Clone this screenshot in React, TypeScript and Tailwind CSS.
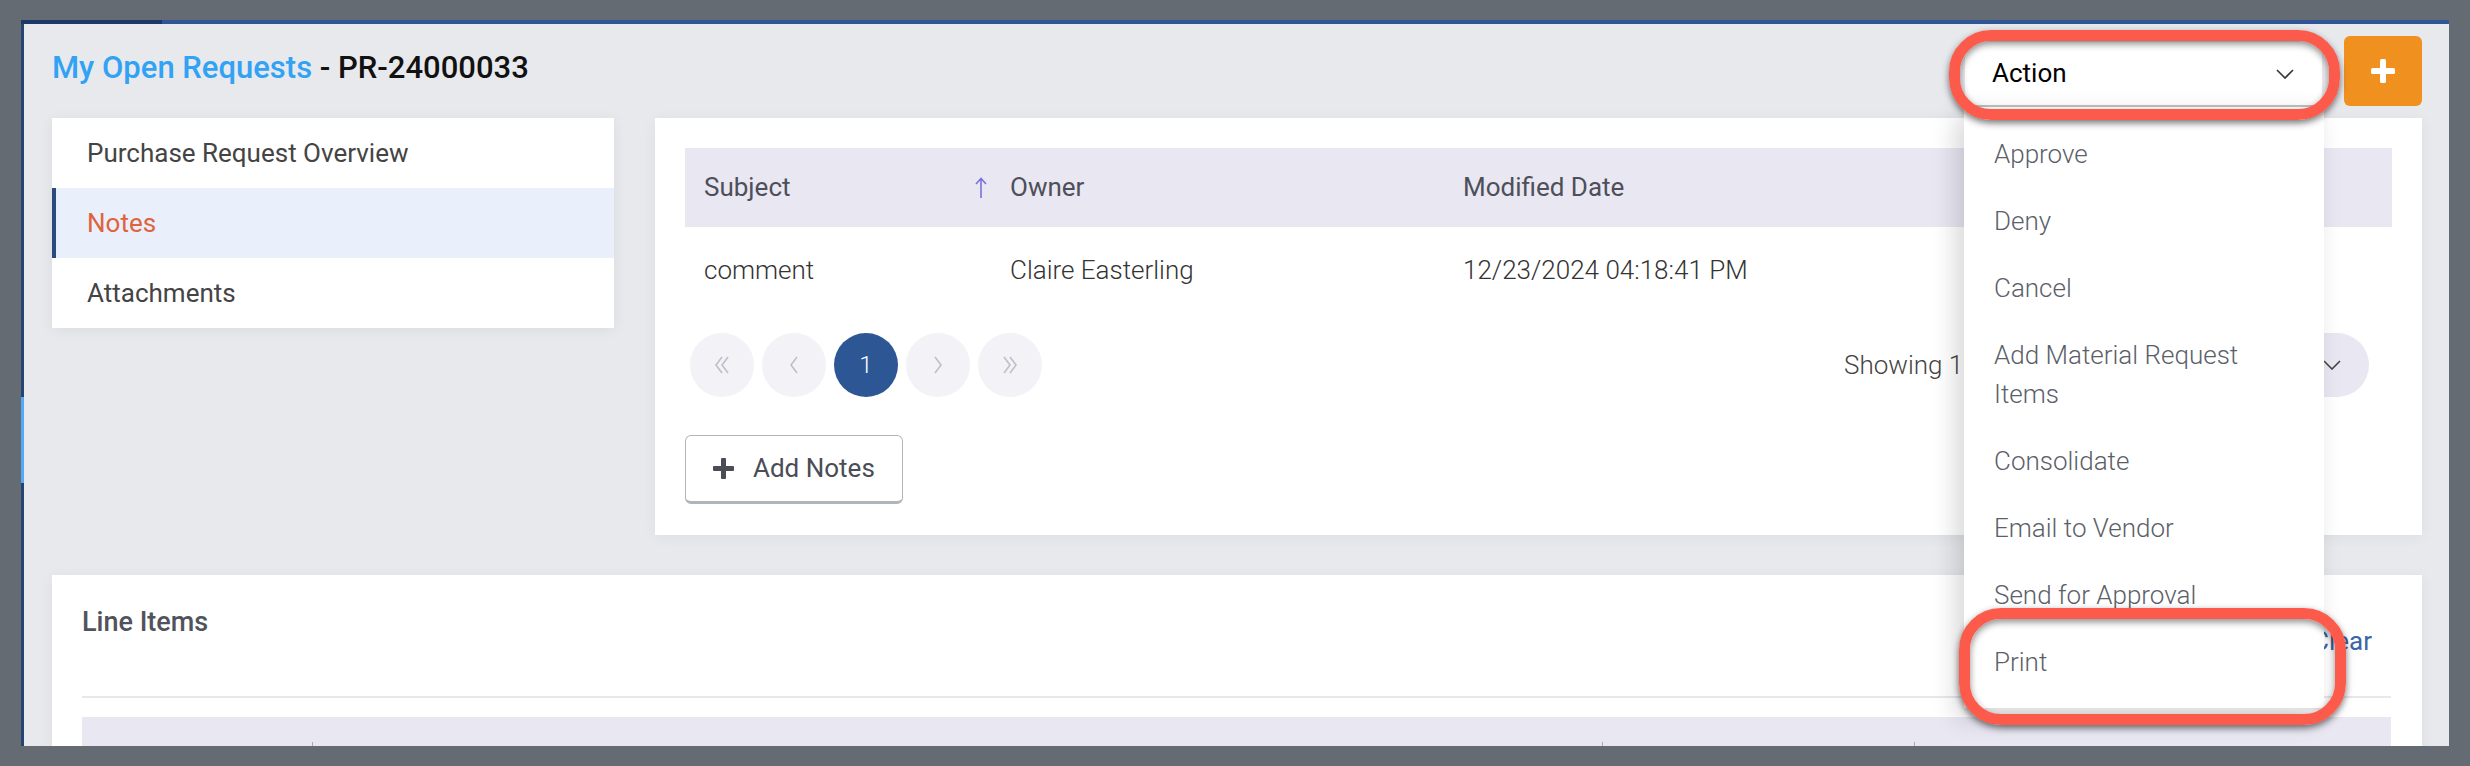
import React from 'react';

const menuItems = ['Approve', 'Deny', 'Cancel', 'Add Material Request|Items', 'Consolidate', 'Email to Vendor', 'Send for Approval', 'Print'];

const Chevron = ({ dir, double }: { dir: 'left' | 'right'; double?: boolean }) => {
  const one = dir === 'left' ? 'M9 2 L3 10 L9 18' : 'M3 2 L9 10 L3 18';
  const two = dir === 'left' ? 'M15 2 L9 10 L15 18' : 'M9 2 L15 10 L9 18';
  return (
    <svg width={double ? 18 : 12} height="20" viewBox={double ? '0 0 18 20' : '0 0 12 20'} fill="none" stroke="#bfbfcc" strokeWidth="1.6">
      <path d={one} />
      {double && <path d={two} />}
    </svg>
  );
};

const DownChevron = ({ color = '#333' }: { color?: string }) => (
  <svg width="18" height="10" viewBox="0 0 18 10" fill="none" stroke={color} strokeWidth="1.6">
    <path d="M1 1 L9 9 L17 1" />
  </svg>
);

const App = () => {
  return (
    <div className="w-[2470px] h-[766px] bg-[#646b73] pt-[20px] pl-[21px] pr-[21px] pb-[20px] overflow-hidden font-['Roboto','Liberation_Sans',sans-serif]">
      <div className="h-full flex flex-col overflow-hidden">
        {/* top accent bar */}
        <div className="h-[4px] flex shrink-0">
          <div className="w-[141px] bg-[#1d3868]" />
          <div className="flex-1 bg-[#2f5596]" />
        </div>

        <div className="flex-1 flex min-h-0">
          <div className="w-[3px] flex flex-col shrink-0">
            <div className="h-[373px] bg-[#264375]" />
            <div className="h-[86px] bg-[#54a8f8]" />
            <div className="flex-1 bg-[#264375]" />
          </div>

          <div className="flex-1 relative bg-[#e8e9ed] pl-[28px] pr-[27px] overflow-hidden">
            {/* title row */}
            <div className="h-[94px] flex items-start justify-between">
              <div className="mt-[24px] leading-[40px] text-[31px] font-medium">
                <span className="text-[#31a2f4]">My Open Requests</span>
                <span className="text-[#111]"> - PR-24000033</span>
              </div>
              <div className="flex items-start gap-[22px]">
                <div className="relative mt-[18px] w-[357px] h-[65px]">
                  <div className="h-full bg-white rounded-[4px] border-b-2 border-[#c4c4c4] flex items-center justify-between pl-[27px] pr-[28px]">
                    <span className="text-[26px] text-black">Action</span>
                    <DownChevron />
                  </div>
                  <div className="absolute z-10 top-[65px] left-[-1px] w-[360px] bg-white pt-[14px] pb-[12px] border-b-2 border-[#e2e2e2] shadow-[-8px_8px_24px_rgba(0,0,0,0.16)]">
                    {menuItems.map((item) => (
                      <div key={item} className="py-[14px] pl-[30px] text-[26px] leading-[39px] font-light text-[#5c5f69]">
                        {item.split('|').map((line) => (
                          <div key={line}>{line}</div>
                        ))}
                      </div>
                    ))}
                  </div>
                </div>
                <div className="mt-[12px] w-[78px] h-[70px] rounded-[6px] bg-[#f0901e] flex items-center justify-center">
                  <svg width="26" height="26" viewBox="0 0 26 26">
                    <rect x="10" y="1" width="6" height="24" rx="1.5" fill="#fff" />
                    <rect x="1" y="10" width="24" height="6" rx="1.5" fill="#fff" />
                  </svg>
                </div>
              </div>
            </div>

            {/* sidebar + notes */}
            <div className="flex items-start gap-[41px]">
              <div className="w-[562px] shrink-0 bg-white shadow-[0_2px_14px_rgba(0,0,0,0.06)] text-[26px] text-[#444]">
                <div className="h-[70px] flex items-center pl-[35px]">Purchase Request Overview</div>
                <div className="h-[70px] flex items-center pl-[31px] bg-[#e9f0fb] border-l-[4px] border-[#2b4a7e] text-[#e0633c]">Notes</div>
                <div className="h-[70px] flex items-center pl-[35px]">Attachments</div>
              </div>

              <div className="flex-1 h-[417px] bg-white px-[30px] pt-[30px] shadow-[0_2px_14px_rgba(0,0,0,0.05)]">
                <div className="h-[79px] bg-[#e9e7f2] flex items-center text-[26px] text-[#4d4f5a]">
                  <div className="w-[306px] pl-[19px] pr-[4px] flex items-center justify-between">
                    <span>Subject</span>
                    <svg width="12" height="22" viewBox="0 0 12 22" fill="none" stroke="#7a72db" strokeWidth="1.6">
                      <path d="M6 21 V2 M1 7 L6 1.5 L11 7" />
                    </svg>
                  </div>
                  <div className="w-[453px] pl-[19px]">Owner</div>
                  <div className="pl-[19px]">Modified Date</div>
                </div>
                <div className="h-[86px] flex items-center text-[26px] font-light text-[#333]">
                  <div className="w-[306px] pl-[19px]">comment</div>
                  <div className="w-[453px] pl-[19px]">Claire Easterling</div>
                  <div className="pl-[19px]">12/23/2024 04:18:41 PM</div>
                </div>

                <div className="mt-[20px] h-[64px] flex items-center justify-between pl-[5px] pr-[23px]">
                  <div className="flex gap-[8px]">
                    <div className="w-[64px] h-[64px] rounded-full bg-[#f2f2f7] flex items-center justify-center"><Chevron dir="left" double /></div>
                    <div className="w-[64px] h-[64px] rounded-full bg-[#f2f2f7] flex items-center justify-center"><Chevron dir="left" /></div>
                    <div className="w-[64px] h-[64px] rounded-full bg-[#2d5694] flex items-center justify-center text-white text-[24px] font-light">1</div>
                    <div className="w-[64px] h-[64px] rounded-full bg-[#f2f2f7] flex items-center justify-center"><Chevron dir="right" /></div>
                    <div className="w-[64px] h-[64px] rounded-full bg-[#f2f2f7] flex items-center justify-center"><Chevron dir="right" double /></div>
                  </div>
                  <div className="w-[525px] flex items-center justify-between">
                    <span className="text-[26px] font-light text-[#444]">Showing 1 to 1 of 1 entries</span>
                    <div className="w-[130px] h-[64px] rounded-full bg-[#e9e7f2] flex items-center justify-end pr-[28px]">
                      <DownChevron color="#444" />
                    </div>
                  </div>
                </div>

                <div className="mt-[38px] w-[218px] h-[69px] rounded-[6px] border-[1.5px] border-b-[3px] border-[#aeb6ba] flex items-center pl-[27px] gap-[19px] text-[26px] text-[#4a4d55]">
                  <svg width="21" height="21" viewBox="0 0 21 21">
                    <rect x="8" y="0" width="5" height="21" rx="1" fill="#4a4d55" />
                    <rect x="0" y="8" width="21" height="5" rx="1" fill="#4a4d55" />
                  </svg>
                  <span>Add Notes</span>
                </div>
              </div>
            </div>

            {/* line items */}
            <div className="mt-[40px] bg-white pl-[30px] pr-[31px] pt-[27px] h-[200px] shadow-[0_2px_14px_rgba(0,0,0,0.05)]">
              <div className="flex items-start justify-between">
                <div className="leading-[40px] text-[27px] font-medium text-[#50535c]">Line Items</div>
                <div className="mt-[20px] mr-[19px] text-[26px] text-[#3b64a8]">Clear</div>
              </div>
              <div className="mt-[35px] h-[2px] bg-[#e8e8ec]" />
              <div className="mt-[19px] h-[79px] bg-[#e9e7f2] flex items-start pt-[25px]">
                <div className="w-[230px]" />
                <div className="w-px h-[24px] bg-[#a9a9b6]" />
                <div className="w-[1289px]" />
                <div className="w-px h-[24px] bg-[#a9a9b6]" />
                <div className="w-[311px]" />
                <div className="w-px h-[24px] bg-[#a9a9b6]" />
              </div>
            </div>

            {/* annotation rings */}
            <div className="absolute z-20 left-[1925px] top-[6px] w-[391px] h-[90px] rounded-[42px] border-[11px] border-[#fc5a4b] shadow-[0_3px_7px_rgba(0,0,0,0.55),inset_0_3px_7px_rgba(0,0,0,0.45)]" />
            <div className="absolute z-20 left-[1935px] top-[584px] w-[387px] h-[117px] rounded-[42px] border-[11px] border-[#fc5a4b] shadow-[0_3px_7px_rgba(0,0,0,0.55),inset_0_3px_7px_rgba(0,0,0,0.45)]" />
          </div>
        </div>
      </div>
    </div>
  );
};

export default App;
